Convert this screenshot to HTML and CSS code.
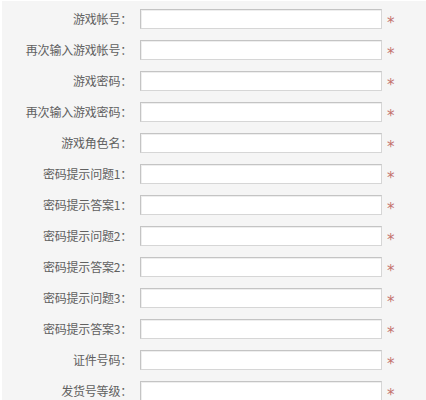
FILE: index.html
```html
<!DOCTYPE html>
<html>
<head>
<meta charset="utf-8">
<link rel="stylesheet" href="styles.css">
</head>
<body>
<div class="form">
  <div class="row"><label class="lbl">游戏帐号：</label><input class="box" type="text"><span class="req">*</span></div>
  <div class="row"><label class="lbl">再次输入游戏帐号：</label><input class="box" type="text"><span class="req">*</span></div>
  <div class="row"><label class="lbl">游戏密码：</label><input class="box" type="password"><span class="req">*</span></div>
  <div class="row"><label class="lbl">再次输入游戏密码：</label><input class="box" type="password"><span class="req">*</span></div>
  <div class="row"><label class="lbl">游戏角色名：</label><input class="box" type="text"><span class="req">*</span></div>
  <div class="row"><label class="lbl">密码提示问题1：</label><input class="box" type="text"><span class="req">*</span></div>
  <div class="row"><label class="lbl">密码提示答案1：</label><input class="box" type="text"><span class="req">*</span></div>
  <div class="row"><label class="lbl">密码提示问题2：</label><input class="box" type="text"><span class="req">*</span></div>
  <div class="row"><label class="lbl">密码提示答案2：</label><input class="box" type="text"><span class="req">*</span></div>
  <div class="row"><label class="lbl">密码提示问题3：</label><input class="box" type="text"><span class="req">*</span></div>
  <div class="row"><label class="lbl">密码提示答案3：</label><input class="box" type="text"><span class="req">*</span></div>
  <div class="row"><label class="lbl">证件号码：</label><input class="box" type="text"><span class="req">*</span></div>
  <div class="row"><label class="lbl">发货号等级：</label><input class="box" type="text"><span class="req">*</span></div>
</div>
</body>
</html>
```
FILE: styles.css
```css
html, body {
  margin: 0;
  padding: 0;
  background: #ffffff;
  height: 100%;
  overflow: hidden;
}
.form {
  box-sizing: border-box;
  height: calc(100% - 1px);
  overflow: hidden;
  margin: 1px 0 0 2px;
  padding-top: 8px;
  background: #f5f5f5;
  font-family: "Noto Sans CJK SC", "DejaVu Sans", sans-serif;
  font-size: 12px;
  color: #606060;
}
.row {
  display: flex;
  align-items: flex-start;
  height: 31px;
}
.lbl {
  width: 130px;
  text-align: right;
  line-height: 20px;
  white-space: nowrap;
  letter-spacing: -0.2px;
}
.box {
  box-sizing: border-box;
  width: 242px;
  height: 20px;
  margin: 0 0 0 8px;
  padding: 0;
  background: #ffffff;
  border: 1px solid #d6d6d6;
  border-top-color: #c4c4c4;
  border-left-color: #c4c4c4;
  box-shadow: inset 1px 1px 0 #eeeeee;
}
.req {
  margin: 7px 0 0 5px;
  font-family: "DejaVu Sans", sans-serif;
  font-size: 15px;
  line-height: 15px;
  color: #c4726c;
}
```
